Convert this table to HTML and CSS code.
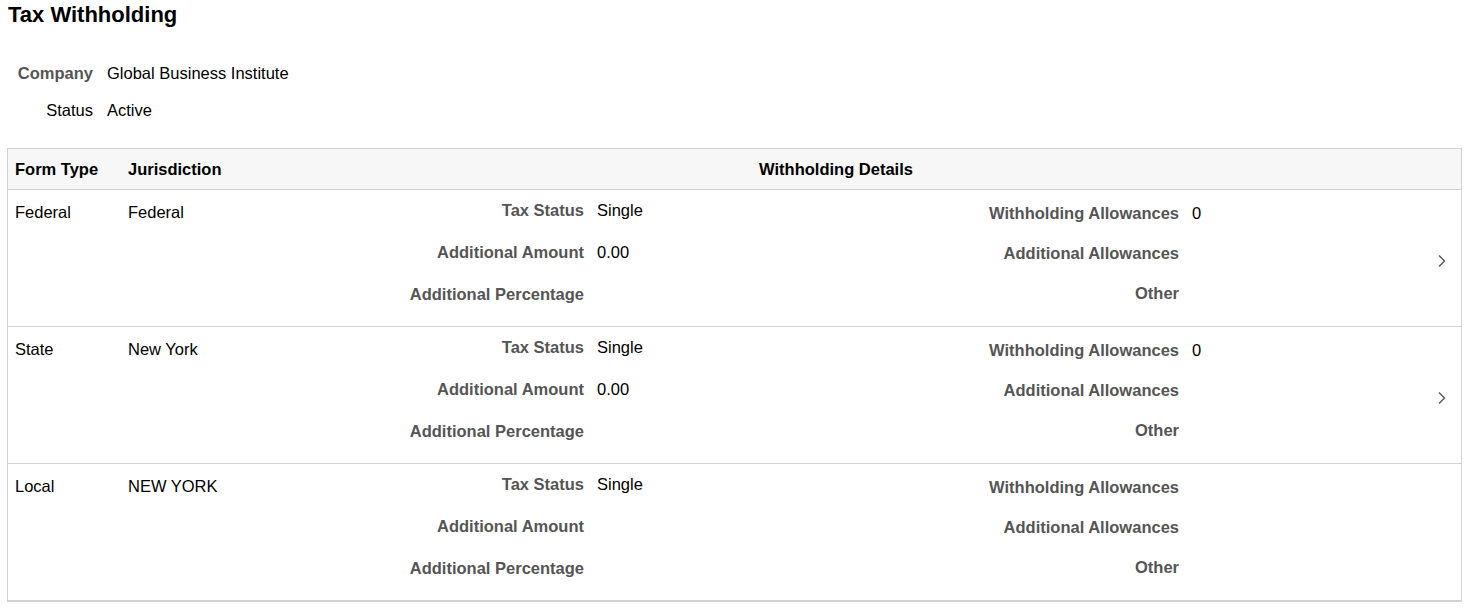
FILE: index.html
```html
<!DOCTYPE html>
<html>
<head>
<meta charset="utf-8">
<link rel="stylesheet" href="styles.css">
</head>
<body>
<h1 class="title">Tax Withholding</h1>
<div class="summary">
  <div class="sum-row"><span class="sum-label">Company</span><span class="sum-value">Global Business Institute</span></div>
  <div class="sum-row"><span class="sum-label">Status</span><span class="sum-value">Active</span></div>
</div>
<div class="grid">
  <div class="head">
    <div class="c-type">Form Type</div>
    <div class="c-jur">Jurisdiction</div>
    <div class="c-det head-det">Withholding Details</div>
    <div class="c-arrow"></div>
  </div>

  <div class="row">
    <div class="c-type cell">Federal</div>
    <div class="c-jur cell">Federal</div>
    <div class="c-det details">
      <div class="dcol dcol-left">
        <div class="pair"><span class="lbl">Tax Status</span><span class="val">Single</span></div>
        <div class="pair"><span class="lbl">Additional Amount</span><span class="val">0.00</span></div>
        <div class="pair"><span class="lbl">Additional Percentage</span><span class="val"></span></div>
      </div>
      <div class="dcol dcol-right">
        <div class="pair"><span class="lbl">Withholding Allowances</span><span class="val">0</span></div>
        <div class="pair"><span class="lbl">Additional Allowances</span><span class="val"></span></div>
        <div class="pair"><span class="lbl">Other</span><span class="val"></span></div>
      </div>
    </div>
    <div class="c-arrow arrow"><svg width="10" height="14" viewBox="0 0 10 14"><path d="M2 1.5 L7.5 7 L2 12.5" fill="none" stroke="#555" stroke-width="1.4"/></svg></div>
  </div>

  <div class="row">
    <div class="c-type cell">State</div>
    <div class="c-jur cell">New York</div>
    <div class="c-det details">
      <div class="dcol dcol-left">
        <div class="pair"><span class="lbl">Tax Status</span><span class="val">Single</span></div>
        <div class="pair"><span class="lbl">Additional Amount</span><span class="val">0.00</span></div>
        <div class="pair"><span class="lbl">Additional Percentage</span><span class="val"></span></div>
      </div>
      <div class="dcol dcol-right">
        <div class="pair"><span class="lbl">Withholding Allowances</span><span class="val">0</span></div>
        <div class="pair"><span class="lbl">Additional Allowances</span><span class="val"></span></div>
        <div class="pair"><span class="lbl">Other</span><span class="val"></span></div>
      </div>
    </div>
    <div class="c-arrow arrow"><svg width="10" height="14" viewBox="0 0 10 14"><path d="M2 1.5 L7.5 7 L2 12.5" fill="none" stroke="#555" stroke-width="1.4"/></svg></div>
  </div>

  <div class="row">
    <div class="c-type cell">Local</div>
    <div class="c-jur cell">NEW YORK</div>
    <div class="c-det details">
      <div class="dcol dcol-left">
        <div class="pair"><span class="lbl">Tax Status</span><span class="val">Single</span></div>
        <div class="pair"><span class="lbl">Additional Amount</span><span class="val"></span></div>
        <div class="pair"><span class="lbl">Additional Percentage</span><span class="val"></span></div>
      </div>
      <div class="dcol dcol-right">
        <div class="pair"><span class="lbl">Withholding Allowances</span><span class="val"></span></div>
        <div class="pair"><span class="lbl">Additional Allowances</span><span class="val"></span></div>
        <div class="pair"><span class="lbl">Other</span><span class="val"></span></div>
      </div>
    </div>
    <div class="c-arrow"></div>
  </div>
</div>
</body>
</html>
```

FILE: styles.css
```css
html, body {
  margin: 0;
  padding: 0;
  background: #fff;
}
body {
  font-family: "Liberation Sans", Arial, sans-serif;
  font-size: 16.5px;
  color: #000;
  padding: 2px 7px 0 7px;
}
.title {
  font-size: 22px;
  font-weight: bold;
  margin: 0 0 0 1px;
  line-height: 25px;
}
.summary {
  padding-top: 37px;
}
.sum-row {
  display: flex;
  align-items: center;
  height: 19px;
  margin-bottom: 18px;
}
.sum-label {
  width: 86px;
  text-align: right;
  font-weight: bold;
  color: #555;
}
.sum-row + .sum-row .sum-label {
  font-weight: normal;
  color: #000;
}
.sum-value {
  margin-left: 14px;
}
.grid {
  margin-top: 28px;
  width: 1453px;
  border: 1px solid #d0d3d6;
  border-bottom-width: 2px;
}
.head {
  display: flex;
  align-items: center;
  height: 40px;
  background: #f7f7f7;
  font-weight: bold;
  border-bottom: 1px solid #d0d3d6;
}
.c-type {
  width: 120px;
  padding-left: 7px;
  box-sizing: border-box;
  flex: none;
}
.c-jur {
  width: 118px;
  box-sizing: border-box;
  flex: none;
}
.c-det {
  width: 1180px;
  flex: none;
}
.head-det {
  text-align: center;
}
.c-arrow {
  flex: 1;
}
.row {
  display: flex;
  height: 136px;
  border-bottom: 1px solid #d0d3d6;
}
.row:last-child {
  border-bottom: none;
}
.cell {
  padding-top: 13px;
  line-height: 19px;
}
.details {
  display: flex;
}
.dcol {
  width: 590px;
  display: flex;
  flex-direction: column;
  gap: 23px;
}
.dcol-left {
  padding-top: 11px;
}
.dcol-right {
  padding-top: 14px;
  gap: 21px;
}
.pair {
  display: flex;
  line-height: 19px;
  height: 19px;
}
.lbl {
  width: 338px;
  text-align: right;
  font-weight: bold;
  color: #555;
  flex: none;
}
.dcol-right .lbl {
  width: 343px;
}
.val {
  margin-left: 13px;
}
.arrow {
  display: flex;
  align-items: center;
  justify-content: flex-end;
  padding-right: 14px;
  padding-top: 6px;
}
```
